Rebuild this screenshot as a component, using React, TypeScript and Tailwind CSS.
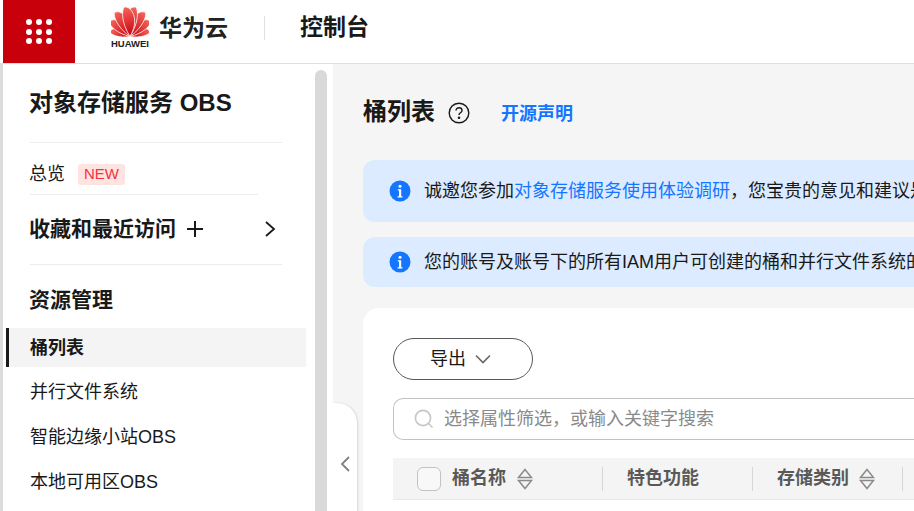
import React from "react";

function Logo() {
  const petals: [number, number][] = [
    [78, 20.5],
    [55, 25.5],
    [33, 28.5],
    [11, 30],
  ];
  const petal = (l: number) =>
    `M0 0 C${-l * 0.26} ${-l * 0.3} ${-l * 0.36} ${-l * 0.66} ${-l * 0.16} ${-l * 0.92} C${-l * 0.11} ${-l * 0.98} ${-l * 0.04} ${-l} 0 ${-l} C${l * 0.11} ${-l * 0.92} ${l * 0.2} ${-l * 0.5} 0 0 Z`;
  return (
    <svg width="38" height="30" viewBox="0 0 38 30" className="block">
      <defs>
        <linearGradient id="pg" x1="0" y1="0" x2="0" y2="1">
          <stop offset="0" stopColor="#f6665c" />
          <stop offset="1" stopColor="#c7000b" />
        </linearGradient>
      </defs>
      {petals.map(([a, l]) => (
        <g key={a} stroke="#fff" strokeWidth="0.7">
          <path d={petal(l)} transform={`translate(19 29.5) rotate(${a})`} fill="url(#pg)" />
          <path d={petal(l)} transform={`translate(19 29.5) scale(-1 1) rotate(${a})`} fill="url(#pg)" />
        </g>
      ))}
    </svg>
  );
}

function Info() {
  return (
    <svg width="22" height="22" viewBox="0 0 22 22" className="shrink-0">
      <circle cx="11" cy="11" r="10.5" fill="#1476ff" />
      <circle cx="11" cy="6.2" r="1.5" fill="#fff" />
      <path d="M8.8 9.2h3.4v7h1.2v1.2H8.6v-1.2h1.4v-5.8H8.8z" fill="#fff" />
    </svg>
  );
}

function Sort() {
  return (
    <svg width="16" height="22" viewBox="0 0 16 22" className="shrink-0" fill="none" stroke="#8a8a8a" strokeWidth="1.5">
      <path d="M1.5 9.5 L8 1.5 L14.5 9.5 Z" />
      <path d="M1.5 12.5 L8 20.5 L14.5 12.5 Z" />
    </svg>
  );
}

function Divider({ w }: { w: string }) {
  return <div className={`h-px bg-[#ededed] ${w}`} />;
}

export default function App() {
  return (
    <div className="w-[914px] h-[511px] overflow-hidden bg-white flex flex-col font-['Liberation_Sans','Noto_Sans_CJK_SC',sans-serif] text-[#191919]">
      <header className="h-[64px] shrink-0 flex border-b border-[#dfdfdf] pl-[3px]">
        <div className="w-[72px] h-[63px] bg-[#c7000b] grid grid-cols-3 gap-x-[3.5px] gap-y-[3.5px] content-center justify-center px-[23px] py-[15px]">
          {Array.from({ length: 9 }).map((_, i) => (
            <span key={i} className="w-[6px] h-[6px] rounded-full bg-white" />
          ))}
        </div>
        <div className="ml-[34px] w-[42px] flex flex-col items-center pt-[7px]">
          <Logo />
          <span className="text-[9.5px] leading-[10px] mt-[2px] font-bold text-[#222] whitespace-nowrap">HUAWEI</span>
        </div>
        <div className="ml-[8px] h-[57px] flex items-center">
          <span className="text-[23px] font-bold text-[#222] w-[69px] whitespace-nowrap">华为云</span>
        </div>
        <div className="ml-[36px] w-px h-[24px] mt-[16px] bg-[#e0e0e0]" />
        <div className="ml-[35px] h-[55px] flex items-center">
          <span className="text-[23px] font-bold whitespace-nowrap">控制台</span>
        </div>
      </header>

      <div className="flex-1 flex min-h-0">
        <aside className="w-[333px] shrink-0 flex border-l-[3px] border-[#dcdcdc] relative">
          <div className="w-[312px] flex flex-col pl-[3px]">
            <div className="pl-[24px] w-[279px] h-[79px] flex flex-col justify-between">
              <h1 className="text-[24px] leading-[32px] font-bold mt-[23px] -ml-px whitespace-nowrap">对象存储服务 OBS</h1>
              <Divider w="w-[252px]" />
            </div>
            <div className="pl-[24px] h-[52px] flex flex-col justify-between">
              <div className="flex items-center mt-[20px] -ml-px h-[22px]">
                <span className="text-[18px]">总览</span>
                <span className="ml-[13px] w-[47px] h-[21px] flex items-center justify-center rounded-[3px] bg-[#ffe3e1] text-[#f6323c] text-[15px]">NEW</span>
              </div>
              <Divider w="w-[228px]" />
            </div>
            <div className="pl-[24px] w-[279px] h-[70px] flex flex-col justify-between">
              <div className="flex items-center mt-[22px] -ml-px h-[24px]">
                <span className="text-[21px] font-bold whitespace-nowrap">收藏和最近访问</span>
                <svg width="18" height="18" viewBox="0 0 18 18" className="ml-[10px]" stroke="#191919" strokeWidth="2">
                  <path d="M9 1v16M1 9h16" />
                </svg>
                <svg width="12" height="18" viewBox="0 0 12 18" className="ml-auto mr-[9px]" fill="none" stroke="#191919" strokeWidth="1.8">
                  <path d="M2 2 L10 9 L2 16" />
                </svg>
              </div>
              <Divider w="w-[252px]" />
            </div>
            <h2 className="pl-[23px] mt-[20px] text-[21px] leading-[30px] font-bold">资源管理</h2>
            <div className="mt-[13px] w-[300px] h-[39px] bg-[#f4f4f4] border-l-[3px] border-[#191919] pl-[21px] pt-[2px] flex items-center text-[18px] font-bold">
              桶列表
            </div>
            <div className="pl-[24px] pt-[3px] flex flex-col text-[18px]">
              {["并行文件系统", "智能边缘小站OBS", "本地可用区OBS"].map((t) => (
                <div key={t} className="h-[45px] flex items-center whitespace-nowrap">{t}</div>
              ))}
            </div>
          </div>
          <div className="w-[12px] mt-[6px] bg-[#d9d9d9] rounded-t-[6px]" />
        </aside>

        <main className="flex-1 min-w-0 bg-[#f5f5f5] pl-[30px] relative overflow-hidden">
          <div className="flex items-center mt-[33px] h-[32px]">
            <h1 className="text-[24px] mb-[2px] font-bold whitespace-nowrap">桶列表</h1>
            <svg width="22" height="22" viewBox="0 0 22 22" className="ml-[13px]" fill="none" stroke="#191919" strokeWidth="1.4">
              <circle cx="11" cy="11" r="9.8" />
              <path d="M8 8.6c0-1.8 1.4-2.9 3-2.9s3 1.1 3 2.7c0 2.4-3 2.3-3 4.6" />
              <circle cx="11" cy="15.8" r="0.6" fill="#191919" />
            </svg>
            <span className="ml-[31px] mt-[2px] text-[18px] font-bold text-[#1476ff] whitespace-nowrap">开源声明</span>
          </div>

          <div className="mt-[31px] h-[62px] rounded-l-[12px] bg-[#dcebff] flex items-center pl-[26px] gap-[13px] text-[18px] overflow-hidden">
            <Info />
            <span className="whitespace-nowrap">诚邀您参加<span className="text-[#1476ff]">对象存储服务使用体验调研</span>，您宝贵的意见和建议是</span>
          </div>
          <div className="mt-[15px] h-[50px] rounded-l-[12px] bg-[#dcebff] flex items-center pl-[26px] gap-[13px] text-[18px] overflow-hidden">
            <Info />
            <span className="whitespace-nowrap">您的账号及账号下的所有IAM用户可创建的桶和并行文件系统的</span>
          </div>

          <section className="mt-[21px] h-[240px] bg-white rounded-l-[16px] pl-[30px] pt-[30px]">
            <button className="w-[140px] h-[42px] rounded-full border border-[#595959] flex items-center justify-center gap-[9px] pr-[5px] text-[18px] text-[#191919]">
              导出
              <svg width="16" height="10" viewBox="0 0 16 10" fill="none" stroke="#666" strokeWidth="1.6">
                <path d="M1 1.5 L8 8.5 L15 1.5" />
              </svg>
            </button>
            <div className="mt-[18px] h-[42px] rounded-l-[10px] border-y border-l border-[#c2c2c2] flex items-center pl-[20px] gap-[10px]">
              <svg width="20" height="20" viewBox="0 0 20 20" fill="none" stroke="#c6c6c6" strokeWidth="1.6">
                <circle cx="9" cy="9" r="7.6" />
                <path d="M14.5 14.5 L18.5 18.5" />
              </svg>
              <span className="text-[18px] text-[#8a8a8a] whitespace-nowrap">选择属性筛选，或输入关键字搜索</span>
            </div>
            <div className="mt-[18px] h-[42px] bg-[#f4f4f4] border-b border-[#e8e8e8] flex items-center text-[18px] font-bold text-[#595959] whitespace-nowrap">
              <div className="w-[210px] flex items-center pl-[24px] border-r border-[#d6d6d6] h-[24px]">
                <span className="w-[24px] h-[24px] rounded-[6px] border border-[#c2c2c2] bg-white/40" />
                <span className="ml-[11px]">桶名称</span>
                <span className="ml-[11px]"><Sort /></span>
              </div>
              <div className="w-[150px] pl-[24px] border-r border-[#d6d6d6] h-[24px] flex items-center">特色功能</div>
              <div className="w-[150px] pl-[24px] border-r border-[#d6d6d6] h-[24px] flex items-center">
                存储类别
                <span className="ml-[10px]"><Sort /></span>
              </div>
            </div>
          </section>
        </main>
      </div>

      <div className="absolute left-[333px] top-[403px] w-[24px] h-[130px] bg-white rounded-tr-[20px] rounded-br-[20px] shadow-[1px_0_2px_rgba(0,0,0,0.12)] flex items-start justify-center pt-[52px]">
        <svg width="12" height="18" viewBox="0 0 12 18" fill="none" stroke="#808080" strokeWidth="1.8">
          <path d="M10 2 L3 9 L10 16" />
        </svg>
      </div>
    </div>
  );
}
